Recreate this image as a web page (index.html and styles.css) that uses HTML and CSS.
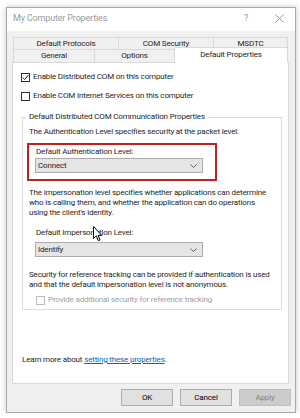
FILE: index.html
```html
<!DOCTYPE html>
<html lang="en">
<head>
    <meta charset="UTF-8">
    <meta name="viewport" content="width=device-width, initial-scale=1.0">
    <title>My Computer Properties</title>
    <link rel="stylesheet" href="styles.css">
</head>
<body>
    <div class="window">
        <div class="titlebar">
            <span class="title">My Computer Properties</span>
            <span class="title-help">?</span>
            <span class="title-close">
                <svg width="9" height="9" viewBox="0 0 9 9"><path d="M0.5 0.5 L8.5 8.5 M8.5 0.5 L0.5 8.5" stroke="#9a9a9a" stroke-width="1" fill="none"/></svg>
            </span>
        </div>
        <div class="dialog">
            <div class="tabs">
                <div class="tab-row">
                    <div class="tab tab-protocols">Default Protocols</div>
                    <div class="tab tab-security">COM Security</div>
                    <div class="tab tab-msdtc">MSDTC</div>
                </div>
                <div class="tab-row">
                    <div class="tab tab-general">General</div>
                    <div class="tab tab-options">Options</div>
                    <div class="tab tab-default active">Default Properties</div>
                </div>
            </div>

            <div class="panel">
                <label class="check">
                    <span class="box">
                        <svg width="7" height="7" viewBox="0 0 7 7"><polyline points="0.8,3.6 2.7,5.5 6.3,1.2" stroke="#222" stroke-width="1" fill="none"/></svg>
                    </span>
                    Enable Distributed COM on this computer
                </label>
                <label class="check second">
                    <span class="box"></span>
                    Enable COM Internet Services on this computer
                </label>

                <fieldset class="group">
                    <legend>Default Distributed COM Communication Properties</legend>
                    <p class="line">The Authentication Level specifies security at the packet level.</p>

                    <div class="highlight">
                        <div class="field-label">Default Authentication Level:</div>
                        <div class="select">
                            <span>Connect</span>
                            <svg width="7" height="4" viewBox="0 0 7 4"><polyline points="0.5,0.5 3.5,3.5 6.5,0.5" stroke="#606060" stroke-width="1" fill="none"/></svg>
                        </div>
                    </div>

                    <p class="para">The impersonation level specifies whether applications can determine<br>who is calling them, and whether the application can do operations<br>using the client's identity.</p>

                    <div class="field-label impersonation">Default Impersonation Level:</div>
                    <div class="select">
                        <span>Identify</span>
                        <svg width="7" height="4" viewBox="0 0 7 4"><polyline points="0.5,0.5 3.5,3.5 6.5,0.5" stroke="#606060" stroke-width="1" fill="none"/></svg>
                    </div>

                    <p class="para tracking">Security for reference tracking can be provided if authentication is used<br>and that the default impersonation level is not anonymous.</p>

                    <label class="check disabled">
                        <span class="box"></span>
                        Provide additional security for reference tracking
                    </label>
                </fieldset>

                <p class="learn">Learn more about <a href="#">setting these properties</a>.</p>
            </div>

            <div class="buttons">
                <button class="btn">OK</button>
                <button class="btn">Cancel</button>
                <button class="btn" disabled>Apply</button>
            </div>
        </div>

        <!-- mouse pointer sitting over the impersonation label -->
        <svg class="cursor" width="10" height="16" viewBox="0 0 10 16">
            <path d="M0.5 0.5 L0.5 12.5 L3.3 9.9 L5.3 14.6 L7 13.9 L5.1 9.4 L8.8 9.4 Z" fill="#fff" stroke="#000" stroke-width="1" stroke-linejoin="round"/>
        </svg>
    </div>
</body>
</html>
```

FILE: styles.css
```css
* {
    box-sizing: border-box;
}

body {
    margin: 0;
    background-color: #fff;
    font-family: Roboto, "Liberation Sans", Arial, sans-serif;
    font-size: 8px;
    letter-spacing: -0.16px;
    color: #1e1e1e;
}

.window {
    position: relative;
    width: 290px;
    height: 406px;
    margin: 7px 0 0 6px;
    border: 1px solid #a9a9a9;
    background-color: #f0f0f0;
    box-shadow: 0 0 6px rgba(0, 0, 0, 0.22);
    display: flex;
    flex-direction: column;
}

.titlebar {
    height: 23px;
    background-color: #fff;
    display: flex;
    align-items: flex-start;
    padding: 5px 0 0 6px;
    color: #999;
    line-height: 11px;
}

.title {
    flex: 1;
    font-size: 9px;
}

.title-help {
    width: 10px;
    text-align: center;
    font-size: 9px;
    margin-right: 24px;
}

.title-close {
    width: 9px;
    height: 11px;
    margin-right: 11px;
    display: flex;
    align-items: center;
}

.dialog {
    flex: 1;
    padding: 6px 0 0 5px;
}

.tabs {
    margin-left: 1px;
}

.tab-row {
    display: flex;
    height: 12px;
}

.tab-row + .tab-row {
    height: 13px;
}

.tab {
    height: 13px;
    border: 1px solid #d9d9d9;
    border-bottom: none;
    margin-right: -1px;
    background-color: #f0f0f0;
    text-align: center;
    line-height: 11px;
}

.tab-protocols { width: 106px; }
.tab-security  { width: 96px; }
.tab-msdtc     { width: 75px; }
.tab-general   { width: 82px; }
.tab-options   { width: 81px; }
.tab-default   { width: 114px; }

.tab.active {
    position: relative;
    z-index: 1;
    height: 16px;
    margin-top: -2px;
    background-color: #fff;
    line-height: 13px;
}

.panel {
    width: 277px;
    height: 322px;
    background-color: #fff;
    border: 1px solid #d9d9d9;
    padding: 8px 0 0 8px;
    white-space: nowrap;
}

.check {
    display: flex;
    align-items: center;
    height: 12px;
    line-height: 12px;
}

.check.second {
    margin-top: 7px;
}

.box {
    width: 9px;
    height: 9px;
    border: 1px solid #333;
    background-color: #fff;
    margin-right: 3px;
    display: flex;
    align-items: center;
    justify-content: center;
}

.group {
    margin: 9px 0 0 1px;
    width: 260px;
    min-width: 0;
    border: 1px solid #dcdcdc;
    padding: 3px 0 3px 6px;
}

.group legend {
    margin-left: -3px;
    padding: 0 3px;
    line-height: 12px;
}

.line {
    margin: 0;
    line-height: 12px;
}

.highlight {
    width: 190px;
    height: 38px;
    margin: 5px 0 0 -2px;
    border: 2px solid #c42020;
    padding: 1px 0 0 6px;
}

.field-label {
    line-height: 12px;
    padding-left: 1px;
}

.field-label.impersonation {
    margin: 9px 0 0 7px;
    padding-left: 0;
}

.select {
    width: 168px;
    height: 15px;
    background-color: #e5e5e5;
    border: 1px solid #adadad;
    display: flex;
    align-items: center;
    justify-content: space-between;
    padding: 0 5px 0 2px;
}

.group > .select {
    margin: 3px 0 0 6px;
}

.para {
    margin: 7px 0 0;
    line-height: 10px;
}

.para.tracking {
    margin-top: 13px;
}

.check.disabled {
    margin: 4px 0 0 7px;
    color: #a0a0a0;
}

.check.disabled .box {
    border-color: #bcbcbc;
}

.learn {
    margin: 44px 0 0 1px;
    line-height: 12px;
}

.learn a {
    color: #0066cc;
}

.buttons {
    display: flex;
    justify-content: flex-end;
    gap: 7px;
    margin-top: 5px;
    padding-right: 4px;
}

.btn {
    width: 52px;
    height: 17px;
    padding: 0;
    font-family: inherit;
    font-size: 8px;
    letter-spacing: inherit;
    color: #000;
    background-color: #e1e1e1;
    border: 1px solid #adadad;
}

.btn:disabled {
    background-color: #cccccc;
    border-color: #bfbfbf;
    color: #838383;
}

.cursor {
    position: absolute;
    left: 86px;
    top: 218px;
}
```
